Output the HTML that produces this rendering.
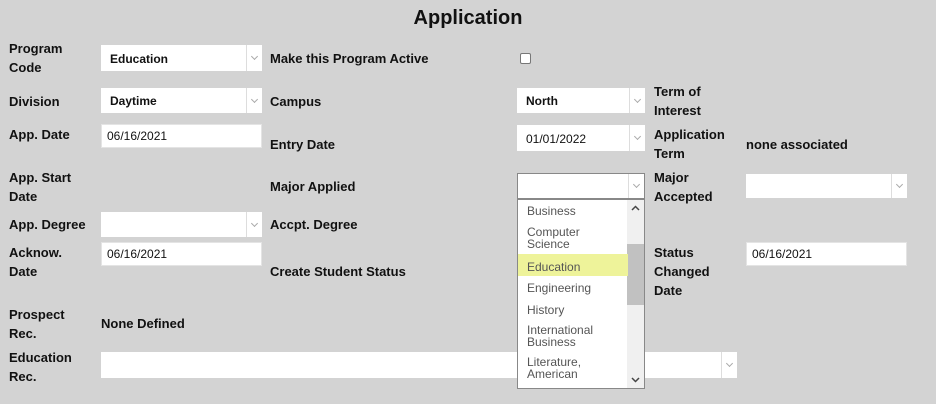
<!DOCTYPE html>
<html><head><style>
body{margin:0;width:936px;height:404px;background:#d3d3d3;font-family:"Liberation Sans",sans-serif;position:relative;overflow:hidden;color:#111}
.a{position:absolute}
.l{position:absolute;font-weight:bold;font-size:13px;line-height:19px}
.s{position:absolute;background:#fff;font-size:12px;font-weight:bold;box-sizing:border-box;padding-left:9px}
.s:after{content:"";position:absolute;right:0;top:0;bottom:0;width:15px;border-left:1px solid #ddd}
.s i{position:absolute;right:5px;top:50%;width:4px;height:4px;border-right:1px solid #aaa;border-bottom:1px solid #aaa;transform:translateY(-4px) rotate(45deg)}
.in{position:absolute;background:#fff;font-size:12px;box-sizing:border-box;padding-left:5px;border:1px solid #e4e4e4}
.it{position:absolute;left:9px;font-size:12px;color:#555;line-height:12px}
</style></head><body>
<div class="a" style="left:0;width:936px;top:6px;text-align:center;font-size:20px;font-weight:bold;line-height:24px">Application</div>

<div class="l" style="left:9px;top:39px">Program<br>Code</div>
<div class="s" style="left:101px;top:45px;width:161px;height:26px;line-height:28px">Education<i></i></div>
<div class="l" style="left:9px;top:92px">Division</div>
<div class="s" style="left:101px;top:88px;width:161px;height:25px;line-height:27px">Daytime<i></i></div>
<div class="l" style="left:9px;top:125px">App. Date</div>
<div class="in" style="left:101px;top:124px;width:161px;height:24px;line-height:22px">06/16/2021</div>
<div class="l" style="left:9px;top:168px">App. Start<br>Date</div>
<div class="l" style="left:9px;top:215px">App. Degree</div>
<div class="s" style="left:101px;top:212px;width:161px;height:25px"><i></i></div>
<div class="l" style="left:9px;top:243px">Acknow.<br>Date</div>
<div class="in" style="left:101px;top:242px;width:161px;height:24px;line-height:22px">06/16/2021</div>
<div class="l" style="left:9px;top:305px">Prospect<br>Rec.</div>
<div class="l" style="left:101px;top:314px">None Defined</div>
<div class="l" style="left:9px;top:348px">Education<br>Rec.</div>
<div class="s" style="left:101px;top:352px;width:636px;height:26px"><i></i></div>

<div class="l" style="left:270px;top:49px">Make this Program Active</div>
<div class="a" style="left:520px;top:53px;width:9px;height:9px;border:1px solid #777;border-radius:2px;background:#fff"></div>
<div class="l" style="left:270px;top:92px">Campus</div>
<div class="l" style="left:270px;top:135px">Entry Date</div>
<div class="l" style="left:270px;top:177px">Major Applied</div>
<div class="l" style="left:270px;top:215px">Accpt. Degree</div>
<div class="l" style="left:270px;top:262px">Create Student Status</div>

<div class="s" style="left:517px;top:88px;width:128px;height:25px;line-height:27px">North<i></i></div>
<div class="s" style="left:517px;top:125px;width:128px;height:26px;line-height:28px;font-weight:normal">01/01/2022<i></i></div>
<div class="s" style="left:517px;top:173px;width:128px;height:26px;border:1px solid #888"><i></i></div>

<div class="l" style="left:654px;top:82px">Term of<br>Interest</div>
<div class="l" style="left:654px;top:125px">Application<br>Term</div>
<div class="l" style="left:746px;top:135px">none associated</div>
<div class="l" style="left:654px;top:168px">Major<br>Accepted</div>
<div class="s" style="left:746px;top:174px;width:161px;height:24px"><i></i></div>
<div class="l" style="left:654px;top:243px">Status<br>Changed<br>Date</div>
<div class="in" style="left:746px;top:242px;width:161px;height:24px;line-height:22px">06/16/2021</div>

<div class="a" style="left:517px;top:199px;width:128px;height:190px;background:#fff;border:1px solid #888;box-sizing:border-box;overflow:hidden">
 <div class="a" style="right:0;top:0;width:17px;height:188px;background:#f0f0f0"></div>
 <div class="a" style="right:0;top:44px;width:17px;height:61px;background:#c1c1c1"></div>
 <svg class="a" style="right:4px;top:5px" width="9" height="6"><path d="M1 5L4.5 1.5L8 5" stroke="#444" stroke-width="1.5" fill="none"/></svg>
 <svg class="a" style="right:4px;top:177px" width="9" height="6"><path d="M1 1L4.5 4.5L8 1" stroke="#444" stroke-width="1.5" fill="none"/></svg>
 <div class="a" style="left:0;top:54px;width:110px;height:22px;background:#eef39a"></div>
 <div class="it" style="top:5px">Business</div>
 <div class="it" style="top:26px">Computer<br>Science</div>
 <div class="it" style="top:61px">Education</div>
 <div class="it" style="top:82px">Engineering</div>
 <div class="it" style="top:104px">History</div>
 <div class="it" style="top:124px">International<br>Business</div>
 <div class="it" style="top:156px">Literature,<br>American</div>
</div>
</body></html>
